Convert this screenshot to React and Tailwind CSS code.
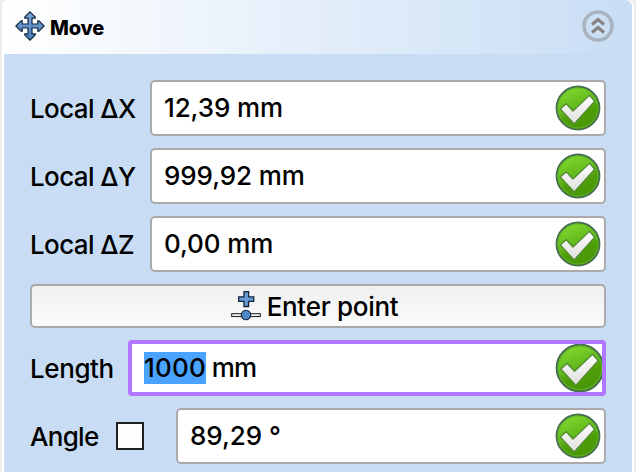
function MoveIcon() {
  return (
    <svg className="h-[30px] w-[30px] shrink-0" viewBox="0 0 30 30">
      <defs>
        <linearGradient id="move" x1="0" y1="0" x2="0" y2="1">
          <stop offset="0" stopColor="#7da9d9" />
          <stop offset="1" stopColor="#477ebd" />
        </linearGradient>
      </defs>
      <path
        d="M15 .8L20.2 6v1.2H17v5.8h5.8V9.8H24L29.2 15 24 20.2h-1.2V17H17v5.8h3.2V24L15 29.2 9.8 24v-1.2H13V17H7.2v3.2H6L.8 15 6 9.8h1.2V13H13V7.2H9.8V6z"
        fill="url(#move)"
        stroke="#14263c"
        strokeWidth="1.2"
      />
    </svg>
  );
}

function CollapseIcon() {
  return (
    <svg className="h-8 w-8 shrink-0" viewBox="0 0 32 32" fill="none">
      <circle cx="16" cy="16" r="14" stroke="#a9b4c0" strokeWidth="3.6" />
      <path d="M10 14.5l6-5 6 5M10 22.5l6-5 6 5" stroke="#85827f" strokeWidth="3" />
    </svg>
  );
}

function CheckIcon({ className }) {
  return (
    <svg className={`shrink-0 ${className}`} viewBox="0 0 46 46">
      <defs>
        <linearGradient id="green" x1="0.2" y1="0" x2="0.6" y2="1">
          <stop offset="0" stopColor="#83dc30" />
          <stop offset="0.5" stopColor="#62b81c" />
          <stop offset="0.65" stopColor="#4e9e08" />
          <stop offset="1" stopColor="#489506" />
        </linearGradient>
        <linearGradient id="tick" x1="0" y1="0" x2="0" y2="1">
          <stop offset="0" stopColor="#ffffff" />
          <stop offset="1" stopColor="#dcdfda" />
        </linearGradient>
      </defs>
      <circle cx="23" cy="23" r="21.5" fill="url(#green)" stroke="#476f50" strokeWidth="1.8" />
      <circle cx="23" cy="23" r="20" fill="none" stroke="#5fb526" strokeWidth="1" />
      <path
        d="M5.3 24l5.9-5.2 6.8 7.2L34.5 10.4l5.2 5.8-20.5 22.8z"
        fill="url(#tick)"
        stroke="#548a32"
        strokeWidth="1.3"
        strokeLinejoin="round"
      />
    </svg>
  );
}

function PointIcon() {
  return (
    <svg className="h-[30px] w-[30px] shrink-0" viewBox="0 0 30 30">
      <path
        d="M13 .7h4.6v5.1h5.1v4.6h-5.1v5.1H13v-5.1H7.7V5.8H13z"
        fill="#689bd3"
        stroke="#14263c"
        strokeWidth="1.3"
      />
      <rect x="0.7" y="22.7" width="28.6" height="2.8" fill="#ffffff" stroke="#20242a" strokeWidth="1.1" />
      <circle cx="15" cy="24" r="4.7" fill="#5089c9" stroke="#14263c" strokeWidth="1.1" />
    </svg>
  );
}

function Field({ label, value }) {
  return (
    <div className="flex h-14 shrink-0 items-center">
      <span className="w-[120px] shrink-0 pt-[2px] tracking-[-0.6px] whitespace-nowrap">{label}</span>
      <div className="flex h-14 flex-1 items-center justify-between rounded-[5px] border-2 border-[#aaaaaa] bg-white pr-[3px] pl-3">
        <span className="tracking-[-0.1px] whitespace-nowrap">{value}</span>
        <CheckIcon className="h-[46px] w-[46px]" />
      </div>
    </div>
  );
}

export default function App() {
  return (
    <div className="h-[472px] w-[636px] overflow-hidden bg-[#ececec] px-[2px] font-['Inter','Liberation_Sans',sans-serif] text-[26px] leading-8 font-[450] text-black">
      <div className="flex h-full flex-col overflow-hidden rounded-t-[6px] bg-white">
        <header className="mr-[2px] flex h-[54px] shrink-0 items-center rounded-t-[6px] bg-linear-to-r from-white to-[#c8ddf4] pr-[18px] pb-[2px] pl-[13px]">
          <MoveIcon />
          <h1 className="ml-[5px] flex-1 pt-[3px] text-[20px] font-extrabold tracking-[-0.2px]">Move</h1>
          <CollapseIcon />
        </header>
        <main className="mx-[2px] flex flex-1 flex-col gap-3 bg-[#c8ddf4] pt-[26px] pr-[26px] pl-[26px]">
          <Field label="Local ΔX" value="12,39 mm" />
          <Field label="Local ΔY" value="999,92 mm" />
          <Field label="Local ΔZ" value="0,00 mm" />
          <button className="flex h-11 shrink-0 items-center justify-center gap-[6px] rounded-[5px] border-2 border-[#aaaaaa] bg-linear-to-b from-[#efefef] to-[#fbfbfb] pr-[7px]">
            <PointIcon />
            <span className="pt-[2px] tracking-[-0.3px]">Enter point</span>
          </button>
          <div className="flex h-14 shrink-0 items-center">
            <span className="w-[98px] pt-[2px] tracking-[-0.4px]">Length</span>
            <div className="flex h-14 flex-1 items-center justify-between overflow-hidden rounded-[4px] border-4 border-[#b176ff] bg-white pl-3">
              <span className="flex whitespace-pre">
                <span className="w-[61.5px] bg-[#4aa3ff] tracking-[0.2px]">1000</span>
                <span className="tracking-[-0.7px]"> mm</span>
              </span>
              <CheckIcon className="-mr-[3px] h-[50px] w-[50px]" />
            </div>
          </div>
          <div className="flex h-14 shrink-0 items-center">
            <span className="w-[86px] pt-[2px] tracking-[-0.7px]">Angle</span>
            <span className="mr-8 h-7 w-7 border-2 border-[#202020] bg-[#fdfdfd]" />
            <div className="flex h-14 flex-1 items-center justify-between rounded-[5px] border-2 border-[#aaaaaa] bg-white pr-[3px] pl-3">
              <span className="tracking-[-0.05px]">89,29 °</span>
              <CheckIcon className="h-[46px] w-[46px]" />
            </div>
          </div>
        </main>
      </div>
    </div>
  );
}
